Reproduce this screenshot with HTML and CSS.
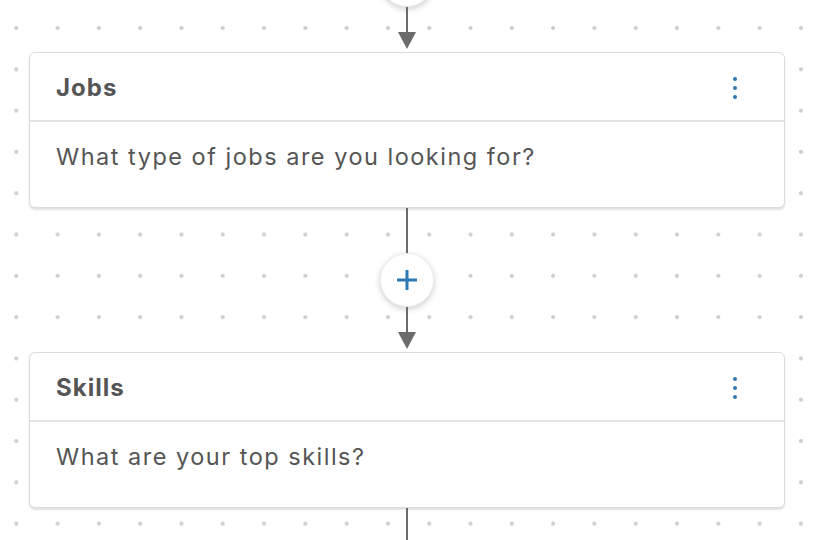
FILE: index.html
```html
<!DOCTYPE html>
<html lang="en">
  <head>
    <meta charset="UTF-8" />
    <meta name="viewport" content="width=device-width, initial-scale=1.0" />
    <title>Flow Builder</title>
    <link rel="stylesheet" href="styles.css">
  </head>
  <body>
    <div class="canvas">
      <button class="add-btn add-btn-top" type="button" aria-label="Add step"></button>
      <div class="line line-short"></div>
      <div class="arrow"></div>

      <div class="card">
        <div class="card-header">
          <h2 class="card-title">Jobs</h2>
          <button class="menu-btn" type="button" aria-label="More">
            <span></span><span></span><span></span>
          </button>
        </div>
        <div class="card-body">What type of jobs are you looking for?</div>
      </div>

      <div class="line line-long"></div>
      <button class="add-btn" type="button" aria-label="Add step">
        <svg width="22" height="22" viewBox="0 0 22 22">
          <path d="M11 1v20M1 11h20" stroke="#2f78b1" stroke-width="3" fill="none" />
        </svg>
      </button>
      <div class="line line-short"></div>
      <div class="arrow"></div>

      <div class="card">
        <div class="card-header">
          <h2 class="card-title">Skills</h2>
          <button class="menu-btn" type="button" aria-label="More">
            <span></span><span></span><span></span>
          </button>
        </div>
        <div class="card-body">What are your top skills?</div>
      </div>

      <div class="line line-long"></div>
    </div>
  </body>
</html>
```

FILE: styles.css
```css
body {
  margin: 0;
  font-family: Inter, "Open Sans", sans-serif;
  color: #555;
  background-color: #fff;
}

.canvas {
  height: 540px;
  overflow: hidden;
  display: flex;
  flex-direction: column;
  align-items: center;
  background-color: #fff;
  background-image: radial-gradient(circle, #cfcfcf 1.7px, transparent 2.3px);
  background-size: 41.3px 41.3px;
  background-position: -4.4px 7.4px;
}

.line {
  width: 2px;
  background-color: #6b6b6b;
  flex-shrink: 0;
}

.line-short {
  height: 26px;
}

.line-long {
  height: 45px;
}

.arrow {
  width: 0;
  height: 0;
  border-left: 9px solid transparent;
  border-right: 9px solid transparent;
  border-top: 17px solid #6b6b6b;
  margin-top: -1px;
  margin-bottom: 3px;
  flex-shrink: 0;
}

.add-btn {
  width: 54px;
  height: 54px;
  flex-shrink: 0;
  border-radius: 50%;
  border: 1px solid #eee;
  background-color: #fff;
  box-shadow: 0 2px 6px rgba(0, 0, 0, 0.2);
  display: flex;
  align-items: center;
  justify-content: center;
  padding: 0;
  cursor: pointer;
}

.add-btn-top {
  margin-top: -47px;
}

.card {
  width: 754px;
  flex-shrink: 0;
  margin-left: 1px;
  background-color: #fff;
  border: 1px solid #dcdcdc;
  border-radius: 6px;
  box-shadow: 0 2px 2px rgba(0, 0, 0, 0.12);
}

.card-header {
  height: 69px;
  box-sizing: border-box;
  display: flex;
  align-items: center;
  justify-content: space-between;
  padding: 2px 41px 0 26px;
  border-bottom: 2px solid #e3e3e3;
}

.card-title {
  margin: 0;
  font-size: 24px;
  font-weight: 700;
  letter-spacing: 1px;
  color: #555;
}

.menu-btn {
  border: none;
  background: none;
  padding: 0;
  width: 16px;
  display: flex;
  flex-direction: column;
  align-items: center;
  gap: 5px;
  cursor: pointer;
}

.menu-btn span {
  width: 4px;
  height: 4px;
  border-radius: 50%;
  background-color: #2f78b1;
}

.card-body {
  height: 85px;
  box-sizing: border-box;
  padding: 20px 26px 0;
  font-size: 23.5px;
  line-height: 30px;
  letter-spacing: 1.5px;
}
```
